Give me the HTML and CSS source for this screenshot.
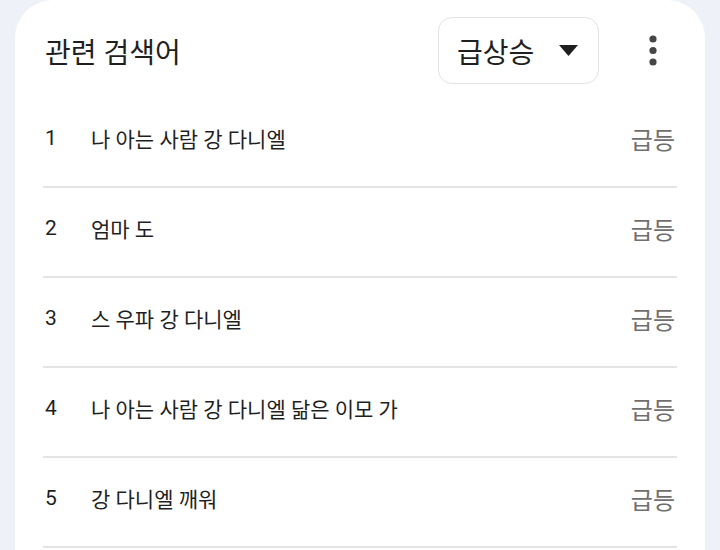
FILE: index.html
```html
<!DOCTYPE html>
<html lang="ko">
<head>
  <meta charset="UTF-8">
  <meta name="viewport" content="width=device-width, initial-scale=1.0">
  <title>관련 검색어</title>
  <link rel="stylesheet" href="styles.css">
</head>
<body>
<div class="card">
  <div class="card-header">
    <h2 class="card-title">관련 검색어</h2>
    <button class="sort-btn">
      <span>급상승</span>
      <svg class="caret" width="19" height="11" viewBox="0 0 19 11"><path d="M0 0h19L9.5 11z" fill="#1f1f1f"/></svg>
    </button>
    <button class="more-btn" aria-label="더보기">
      <svg width="8" height="31" viewBox="0 0 8 31">
        <circle cx="4" cy="4" r="3.6" fill="#444746"/>
        <circle cx="4" cy="15.5" r="3.6" fill="#444746"/>
        <circle cx="4" cy="27" r="3.6" fill="#444746"/>
      </svg>
    </button>
  </div>
  <ul class="query-list">
    <li class="query-row"><span class="rank">1</span><span class="query">나 아는 사람 강 다니엘</span><span class="trend">급등</span></li>
    <li class="query-row"><span class="rank">2</span><span class="query">엄마 도</span><span class="trend">급등</span></li>
    <li class="query-row"><span class="rank">3</span><span class="query">스 우파 강 다니엘</span><span class="trend">급등</span></li>
    <li class="query-row"><span class="rank">4</span><span class="query">나 아는 사람 강 다니엘 닮은 이모 가</span><span class="trend">급등</span></li>
    <li class="query-row"><span class="rank">5</span><span class="query">강 다니엘 깨워</span><span class="trend">급등</span></li>
  </ul>
</div>
</body>
</html>
```

FILE: styles.css
```css
body {
  margin: 0;
  background-color: #eef2f8;
  font-family: Roboto, "Noto Sans CJK KR", sans-serif;
  color: #1f1f1f;
}
.card {
  margin: 0 15px;
  padding: 17px 28px 0 28px;
  background-color: #fff;
  border-radius: 38px 38px 0 0;
  height: 550px;
  box-sizing: border-box;
}
.card-header {
  display: flex;
  align-items: center;
  height: 67px;
}
.card-title {
  flex: 1;
  margin: 0 0 0 2px;
  font-size: 28px;
  font-weight: 400;
}
.sort-btn {
  display: flex;
  align-items: center;
  justify-content: space-between;
  width: 161px;
  height: 67px;
  padding: 0 20px 0 18px;
  margin-right: 30px;
  border: 1px solid #e1e3e6;
  border-radius: 14px;
  background: #fff;
  font-family: inherit;
  font-size: 28px;
  color: #1f1f1f;
}
.more-btn {
  display: flex;
  align-items: center;
  justify-content: center;
  width: 48px;
  height: 48px;
  padding: 0;
  border: none;
  background: none;
}
.query-list {
  list-style: none;
  margin: 14px 0 0 0;
  padding: 0;
}
.query-row {
  display: flex;
  align-items: center;
  height: 90px;
  padding-bottom: 8px;
  box-sizing: border-box;
  border-bottom: 2px solid #e3e3e3;
  font-size: 21px;
}
.rank {
  width: 46px;
  padding-left: 2px;
}
.query {
  flex: 1;
}
.trend {
  margin-right: 2px;
  font-size: 24px;
  color: #6f6f6f;
}
```
